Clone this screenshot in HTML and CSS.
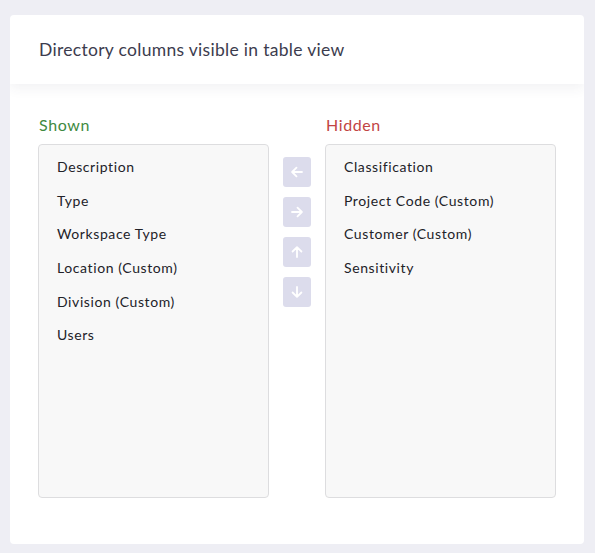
FILE: index.html
```html
<!DOCTYPE html>
<html lang="en">
<head>
<meta charset="UTF-8">
<meta name="viewport" content="width=device-width, initial-scale=1.0">
<title>Directory columns</title>
<link rel="stylesheet" href="styles.css">
</head>
<body>
<div class="card">
  <div class="card-header">
    <h2>Directory columns visible in table view</h2>
  </div>
  <div class="card-body">
    <div class="column">
      <h3 class="label shown">Shown</h3>
      <ul class="list">
        <li>Description</li>
        <li>Type</li>
        <li>Workspace Type</li>
        <li>Location (Custom)</li>
        <li>Division (Custom)</li>
        <li>Users</li>
      </ul>
    </div>
    <div class="controls">
      <button class="move-btn" title="Show">
        <svg width="14" height="14" viewBox="0 0 14 14"><path d="M12 7H2.3M6.5 2.6L2.1 7l4.4 4.4" fill="none" stroke="#fff" stroke-width="1.8" stroke-linecap="round" stroke-linejoin="round"/></svg>
      </button>
      <button class="move-btn" title="Hide">
        <svg width="14" height="14" viewBox="0 0 14 14"><path d="M2 7h9.7M7.5 2.6L11.9 7l-4.4 4.4" fill="none" stroke="#fff" stroke-width="1.8" stroke-linecap="round" stroke-linejoin="round"/></svg>
      </button>
      <button class="move-btn" title="Move up">
        <svg width="14" height="14" viewBox="0 0 14 14"><path d="M7 12V2.3M2.6 6.5L7 2.1l4.4 4.4" fill="none" stroke="#fff" stroke-width="1.8" stroke-linecap="round" stroke-linejoin="round"/></svg>
      </button>
      <button class="move-btn" title="Move down">
        <svg width="14" height="14" viewBox="0 0 14 14"><path d="M7 2v9.7M2.6 7.5L7 11.9l4.4-4.4" fill="none" stroke="#fff" stroke-width="1.8" stroke-linecap="round" stroke-linejoin="round"/></svg>
      </button>
    </div>
    <div class="column">
      <h3 class="label hidden">Hidden</h3>
      <ul class="list">
        <li>Classification</li>
        <li>Project Code (Custom)</li>
        <li>Customer (Custom)</li>
        <li>Sensitivity</li>
      </ul>
    </div>
  </div>
</div>
</body>
</html>
```

FILE: styles.css
```css
body {
  font-family: Lato, "Open Sans", sans-serif;
  margin: 0;
  padding: 15px 11px 9px 10px;
  background-color: #eeeef4;
}
.card {
  background-color: #fff;
  border-radius: 4px;
  height: 529px;
  overflow: hidden;
}
.card-header {
  height: 69px;
  display: flex;
  align-items: center;
  padding-left: 29px;
  box-shadow: 0 4px 12px rgba(60, 60, 90, 0.07);
  position: relative;
}
.card-header h2 {
  margin: 0;
  font-size: 17.5px;
  font-weight: 400;
  color: #3c3c4e;
  letter-spacing: 0.3px;
}
.card-body {
  display: flex;
  padding: 30px 28px 0 28px;
}
.column {
  width: 231px;
}
.label {
  margin: 0 0 8px 1px;
  font-size: 16px;
  font-weight: 400;
  line-height: 22px;
  letter-spacing: 0.6px;
}
.label.shown {
  color: #3f8a3f;
}
.label.hidden {
  color: #c24444;
}
.list {
  list-style: none;
  margin: 0;
  padding: 7px 0 0 0;
  height: 345px;
  background-color: #f8f8f8;
  border: 1px solid #dddddf;
  border-radius: 4px;
}
.list li {
  padding-left: 18px;
  height: 33.7px;
  line-height: 29px;
  font-size: 14px;
  letter-spacing: 0.6px;
  color: #222228;
}
.controls {
  width: 56px;
  display: flex;
  flex-direction: column;
  align-items: center;
  gap: 10px;
  padding-top: 43px;
}
.move-btn {
  width: 28px;
  height: 30px;
  border: none;
  padding: 0;
  border-radius: 3px;
  background-color: #dcdcec;
  display: flex;
  align-items: center;
  justify-content: center;
  cursor: pointer;
}
```
